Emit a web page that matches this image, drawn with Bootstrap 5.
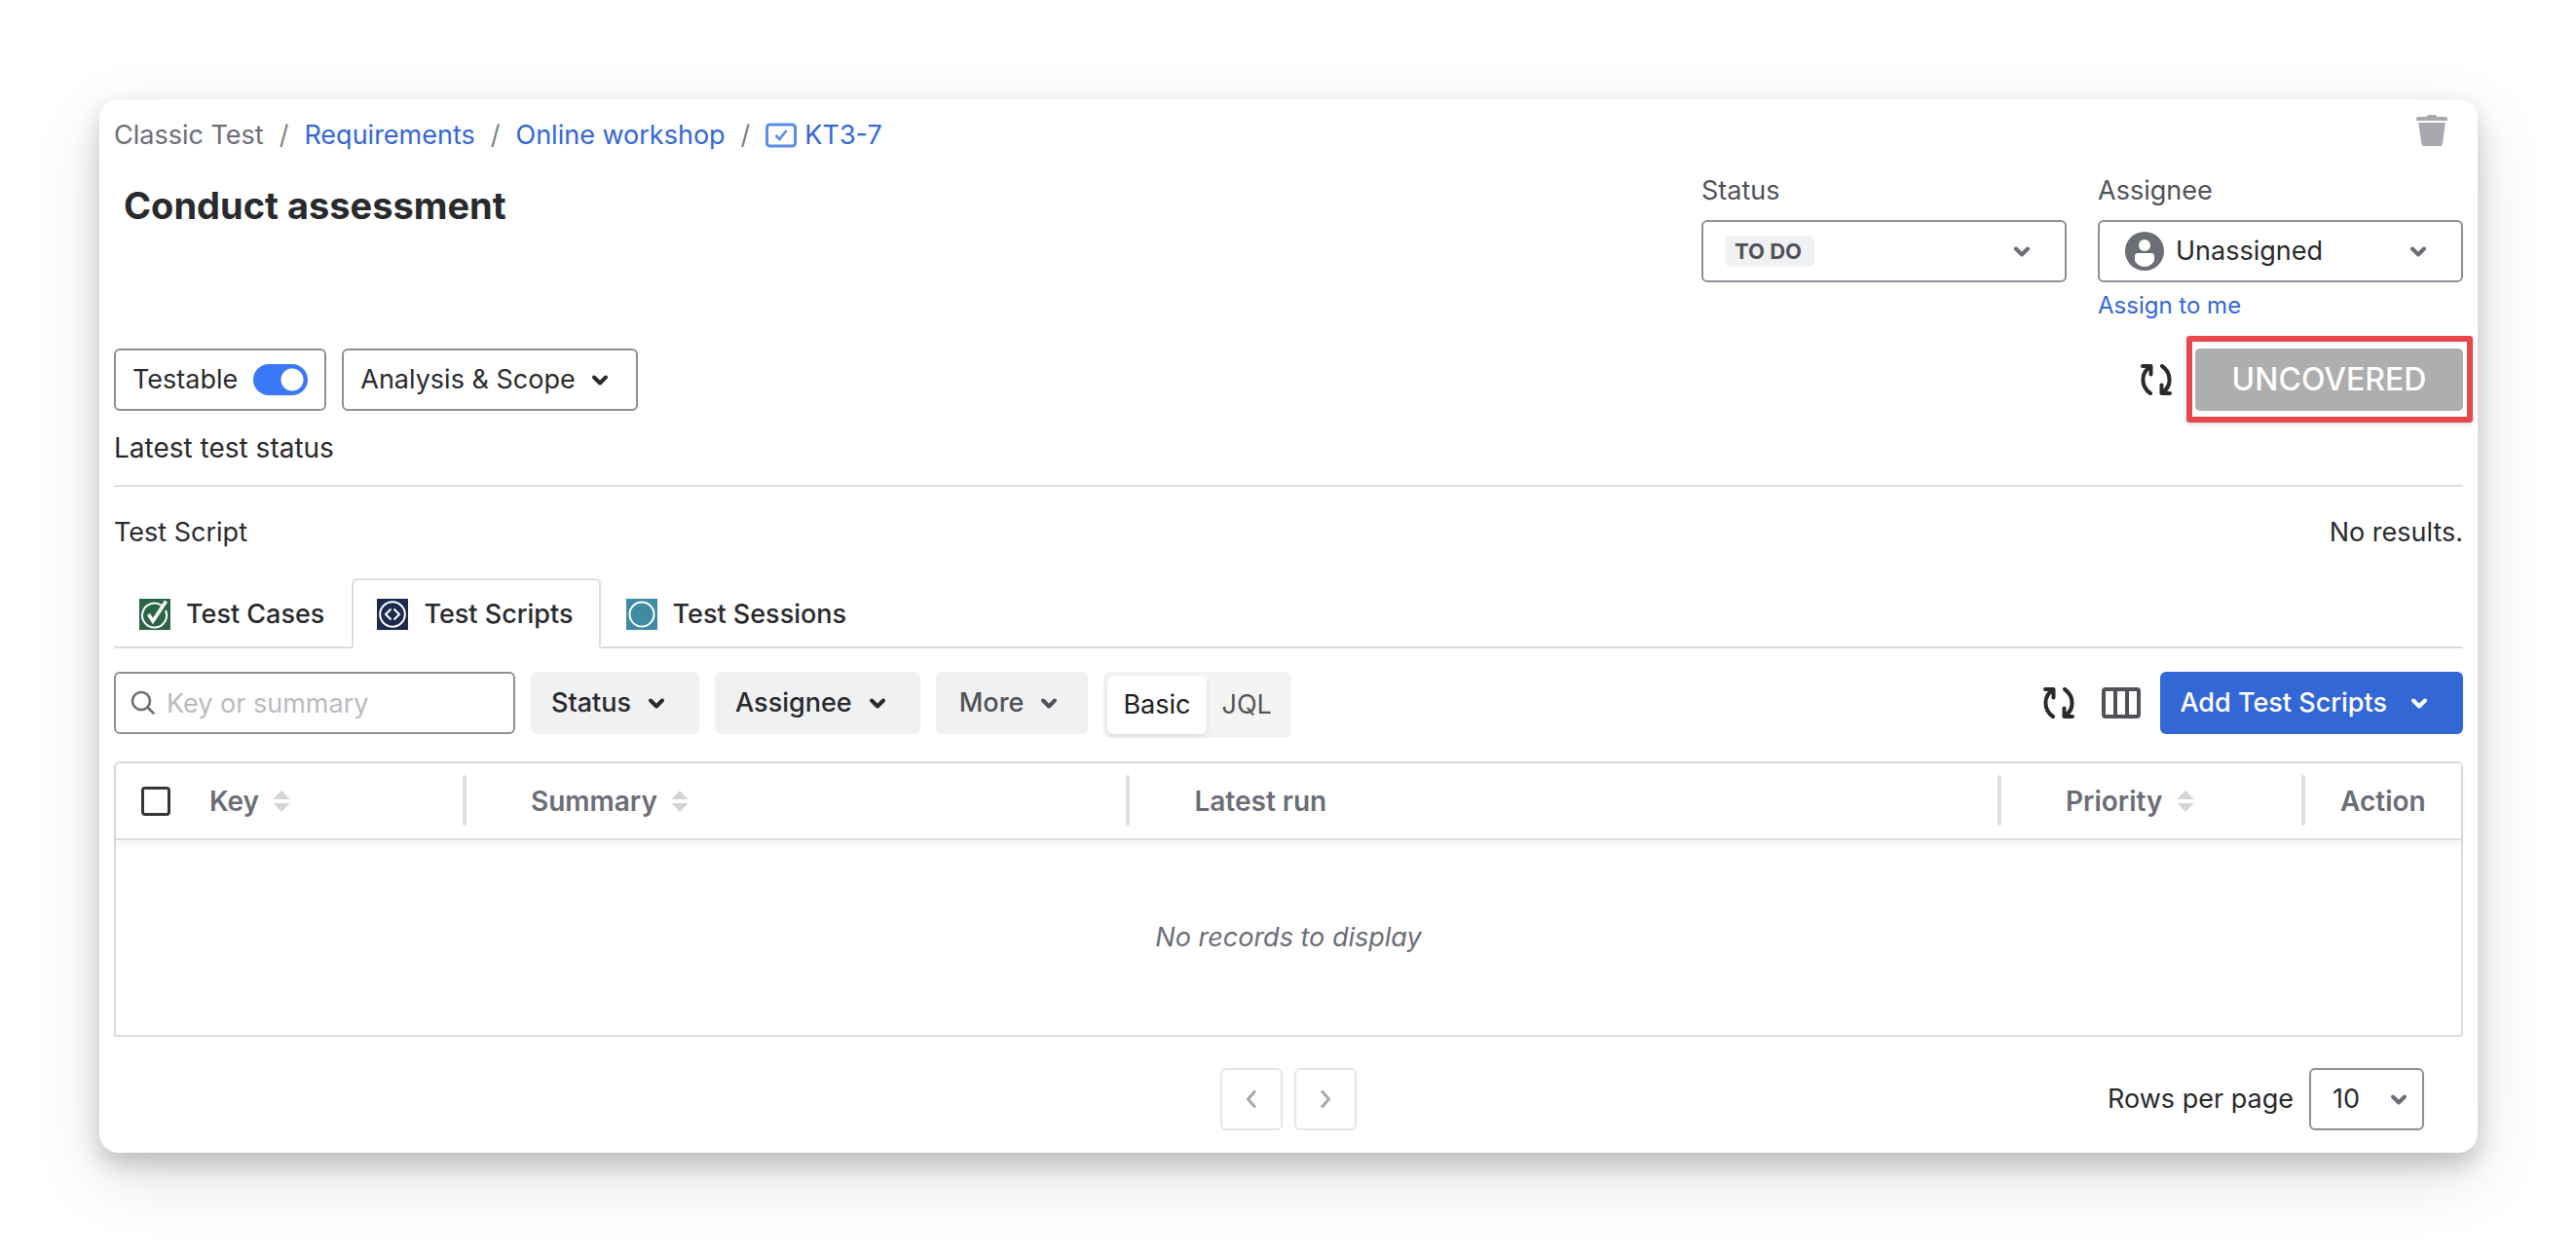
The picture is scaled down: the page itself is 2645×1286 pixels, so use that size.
<!DOCTYPE html>
<html lang="en">
<head>
<meta charset="utf-8">
<meta name="viewport" content="width=device-width, initial-scale=1">
<title>Conduct assessment</title>
<link href="https://cdn.jsdelivr.net/npm/bootstrap@5.3.0/dist/css/bootstrap.min.css" rel="stylesheet">
<style>
  :root {
    --ink: #292a2e;
    --ink-soft: #505258;
    --ink-muted: #6b6e76;
    --edge: #8c8f97;
    --rule: #dddddd;
    --brand: #3367d6;
    --fill: #f0f1f2;
  }
  body {
    font-family: Inter, "Liberation Sans", sans-serif;
    font-size: 27px;
    line-height: 32px;
    color: var(--ink);
    background: #fff;
    padding: 102px 101px 102px 102px;
  }
  a { color: var(--brand); text-decoration: none; }
  svg { display: block; flex: none; }
  .panel {
    padding: 15px 15px 23px;
    border-radius: 20px;
    background: #fff;
    box-shadow: 0 12px 24px rgba(0,0,0,.18), 0 24px 72px rgba(0,0,0,.13);
  }
  .crumb-row { height: 63px; }
  .crumbs { --bs-breadcrumb-item-padding-x: 16px; --bs-breadcrumb-divider-color: #7d818a; padding-top: 6px; margin: 0; }
  .crumbs .breadcrumb-item:first-child { color: var(--ink-muted); }
  .crumbs .breadcrumb-item { display: flex; align-items: center; }
  .icon-btn { border: 0; background: none; padding: 0; color: var(--ink); }
  .trash { color: #a7a9ad; margin: 1px 16px 0 0; }
  .head-row { min-height: 178px; }
  .page-title { font-size: 38px; line-height: 48px; font-weight: 700; margin: 7px 0 0 10px; }
  .fields { gap: 32px; }
  .field-col { width: 375px; }
  .field-col label { display: block; color: var(--ink-soft); margin-bottom: 14px; }
  .field-col a { display: block; font-size: 24px; margin-top: 8px; }
  .picker {
    appearance: none;
    height: 64px;
    border: 2px solid var(--edge);
    border-radius: 6px;
    background: #fff;
    color: var(--ink);
    outline-offset: 2px;
  }
  .field-col .picker { width: 100%; }
  .picker-wrap { position: relative; }
  .picker-wrap .chev { position: absolute; right: 37px; top: 24px; pointer-events: none; color: var(--ink-muted); }
  .picker-wrap .avatar { position: absolute; left: 28px; top: 12px; pointer-events: none; }
  .picker-status {
    padding: 0 80px 0 32px;
    font-size: 22px;
    font-weight: 700;
    color: var(--ink-soft);
    background: #fff url("data:image/svg+xml,%3Csvg xmlns='http://www.w3.org/2000/svg' width='92' height='32'%3E%3Crect width='92' height='32' rx='6' fill='%23f0f1f2'/%3E%3C/svg%3E") 22px 14px no-repeat;
  }
  .picker-user { padding: 0 70px 0 78px; }
  .boxed {
    display: inline-flex;
    align-items: center;
    gap: 16px;
    height: 64px;
    padding: 0 17px;
    border: 2px solid var(--edge);
    border-radius: 6px;
    background: #fff;
    color: var(--ink);
  }
  .boxed-menu { padding-right: 28px; }
  .toggle.form-check-input {
    appearance: none;
    width: 56px;
    height: 32px;
    margin: 0;
    border: 0;
    border-radius: 16px;
    background: #3b78f5 radial-gradient(circle at 40px 16px, #fff 11px, transparent 12px);
  }
  .cover {
    position: relative;
    width: 275px;
    height: 64px;
    border-radius: 5px;
    background: #aeaeae;
    color: #fff;
    font-size: 32px;
    line-height: 64px;
    font-weight: 500;
    text-align: center;
    margin-left: 24px;
  }
  .cover::after {
    content: "";
    position: absolute;
    inset: -13px -10px -12px -9px;
    border: 6px solid #e7484d;
    border-radius: 3px;
    box-shadow: 0 2px 4px rgba(0,0,0,.15);
  }
  .latest { font-size: 28px; margin: 22px 0; }
  .split { border: 0; border-top: 2px solid var(--rule); opacity: 1; margin: 0; }
  .result-line { margin: 31px 0; }
  .script-tabs { border-bottom: 2px solid var(--rule); --bs-nav-tabs-border-width: 2px; --bs-nav-tabs-border-radius: 6px; --bs-nav-tabs-link-active-border-color: #ddd #ddd #fff; --bs-nav-tabs-link-active-color: var(--ink); }
  .script-tabs .nav-link {
    display: flex;
    align-items: center;
    gap: 16px;
    height: 72px;
    padding: 2px 26px 0 24px;
    color: var(--ink);
    font-weight: 500;
  }
  .tools { margin: 24px 0; }
  .search { position: relative; width: 412px; margin-right: 16px; }
  .search svg { position: absolute; left: 17px; top: 19px; color: var(--ink-muted); }
  .search input { width: 100%; height: 64px; padding: 0 16px 0 52px; border: 2px solid var(--edge); border-radius: 6px; color: var(--ink); }
  .search input::placeholder { color: #b9bbc0; opacity: 1; }
  .filter {
    display: flex;
    align-items: center;
    gap: 17px;
    height: 64px;
    padding: 0 35px 0 21px;
    margin-right: 16px;
    border: 0;
    border-radius: 6px;
    background: var(--fill);
    color: var(--ink);
    font-weight: 500;
  }
  .filter-more { padding: 0 31px 0 24px; color: var(--ink-soft); }
  .modes { height: 68px; padding: 4px; border-radius: 6px; background: #f4f4f4; }
  .modes label { height: 60px; line-height: 60px; padding: 0 16px; border-radius: 6px; color: #555; }
  .modes .btn-check:checked + label { background: #fff; color: #1d1d1f; box-shadow: 0 2px 5px rgba(0,0,0,.1); }
  .icon-pair { gap: 28px; height: 64px; margin-right: 20px; }
  .add-btn { display: flex; align-items: center; gap: 24px; height: 64px; padding: 0 36px 0 20px; border: 0; border-radius: 6px; background: var(--brand); color: #fff; font-weight: 500; }
  .grid-box { border: 2px solid var(--rule); border-radius: 6px 6px 0 0; }
  .grid-box table { width: 100%; table-layout: fixed; border-collapse: separate; border-spacing: 0; }
  .grid-box th { position: relative; height: 79px; padding: 0 0 0 66px; color: var(--ink-muted); font-size: 28px; font-weight: 600; border-bottom: 2px solid var(--rule); }
  .grid-box thead { box-shadow: 0 4px 8px rgba(0,0,0,.06); }
  .grid-box th.ruled::after { content: ""; position: absolute; right: 0; top: 12px; width: 4px; height: 52px; border-radius: 2px; background: #dfdfdf; }
  .grid-box th.tight { padding-left: 0; }
  .grid-box th.act { padding-left: 36px; }
  .grid-box th.pick { padding-left: 26px; }
  .sorter { display: flex; align-items: center; gap: 14px; padding: 0; border: 0; background: none; color: inherit; font-weight: inherit; }
  .grid-box input { display: block; appearance: none; width: 30px; height: 30px; margin: 0; border: 3px solid #35363a; border-radius: 4px; background: #fff; }
  .grid-box td { height: 200px; text-align: center; font-style: italic; color: var(--ink-muted); }
  .c-pick { width: 96px; } .c-key { width: 264px; } .c-sum { width: 28.3%; } .c-pri { width: 312px; } .c-act { width: 160px; }
  .foot { display: grid; grid-template-columns: 1fr auto 1fr; align-items: center; margin-top: 32px; }
  .pager { gap: 12px; }
  .pager button { display: grid; place-items: center; width: 64px; height: 64px; padding: 0; border: 2px solid #e6e6e6; border-radius: 6px; background: #fff; color: #a9a9a9; }
  .per-page { gap: 16px; margin-right: 40px; }
  .per-page .picker { width: 118px; padding: 0 0 0 22px; }
  .per-page .chev { right: 17px; }
</style>
</head>
<body>
<svg width="0" height="0" class="position-absolute" aria-hidden="true">
  <symbol id="chev" viewBox="0 0 18 16"><path d="M3 5.500l6 6 6-6" fill="none" stroke="currentColor" stroke-width="4" stroke-linecap="round" stroke-linejoin="round"/></symbol>
  <symbol id="sync" viewBox="0 0 32 32"><g fill="none" stroke="currentColor" stroke-width="4" stroke-linecap="round" stroke-linejoin="round"><path d="M10 30C0 23 0 9 9.500 3M2 2h8.500v8.500"/><path d="M22 2c10 7 10 21 .5 27M30 30h-8.500v-8.500"/></g></symbol>
  <symbol id="sort" viewBox="0 0 18 22"><path d="M9 0l8.500 9H.5zM9 22L.5 13h17z" fill="#d3d4d6"/></symbol>
</svg>
<main class="panel">
  <div class="crumb-row d-flex justify-content-between align-items-start">
    <nav aria-label="breadcrumb">
      <ol class="breadcrumb crumbs">
        <li class="breadcrumb-item">Classic Test</li>
        <li class="breadcrumb-item"><a href="#">Requirements</a></li>
        <li class="breadcrumb-item"><a href="#">Online workshop</a></li>
        <li class="breadcrumb-item"><a href="#" class="d-flex align-items-center gap-2"><svg width="32" height="26" viewBox="0 0 32 26" fill="none" stroke="#5a8ce8"><rect x="1.500" y="2" width="29" height="22" rx="3" stroke-width="3"/><path d="M10.500 13l4 4 7-9" stroke-width="2.600"/></svg>KT3-7</a></li>
      </ol>
    </nav>
    <button type="button" class="icon-btn trash" aria-label="Delete"><svg width="32" height="32" viewBox="0 0 32 32" fill="currentColor"><path d="M0 6V4q0-2 2-2h8.500q.5-2 2.500-2h6q2 0 2.500 2H30q2 0 2 2v2zM2.200 8h27.600L27 30q-.3 2-2 2H7.500q-1.700 0-2-2z"/></svg></button>
  </div>

  <div class="head-row d-flex justify-content-between align-items-start">
    <h1 class="page-title">Conduct assessment</h1>
    <div class="fields d-flex">
      <div class="field-col">
        <label for="status">Status</label>
        <div class="picker-wrap">
          <select id="status" class="picker picker-status"><option>TO DO</option></select>
          <svg class="chev" width="18" height="16"><use href="#chev"/></svg>
        </div>
      </div>
      <div class="field-col">
        <label for="assignee">Assignee</label>
        <div class="picker-wrap">
          <select id="assignee" class="picker picker-user"><option>Unassigned</option></select>
          <svg class="avatar" width="40" height="40" viewBox="0 0 40 40"><circle cx="20" cy="20" r="20" fill="#6b6e76"/><circle cx="20" cy="14" r="6" fill="#fff"/><path d="M10 25q0-3 3-3h14q3 0 3 3v5q-4 6-10 6t-10-6z" fill="#fff"/></svg>
          <svg class="chev" width="18" height="16"><use href="#chev"/></svg>
        </div>
        <a href="#">Assign to me</a>
      </div>
    </div>
  </div>

  <div class="d-flex justify-content-between align-items-center">
    <div class="d-flex gap-3">
      <div class="boxed"><label for="testable">Testable</label><input id="testable" type="checkbox" role="switch" class="form-check-input toggle" checked></div>
      <button type="button" class="boxed boxed-menu">Analysis &amp; Scope <svg width="18" height="16"><use href="#chev"/></svg></button>
    </div>
    <div class="d-flex align-items-center">
      <button type="button" class="icon-btn" aria-label="Refresh coverage"><svg width="32" height="32"><use href="#sync"/></svg></button>
      <div class="cover">UNCOVERED</div>
    </div>
  </div>

  <p class="latest">Latest test status</p>
  <hr class="split">
  <div class="result-line d-flex justify-content-between"><span>Test Script</span><span>No results.</span></div>

  <ul class="nav nav-tabs script-tabs">
    <li class="nav-item"><a class="nav-link" href="#"><svg width="32" height="32" viewBox="0 0 32 32" fill="none" stroke="#fff"><path d="M0 0h32v32H0z" fill="#2a6645" stroke="none"/><path d="M23 7a12.500 12.500 0 1 0 4 5" stroke-width="2"/><path d="M9.500 16l4.500 7L27.500 2.500" stroke-width="3.600"/></svg>Test Cases</a></li>
    <li class="nav-item"><a class="nav-link active" aria-current="page" href="#"><svg width="32" height="32" viewBox="0 0 32 32" fill="none" stroke="#fff" stroke-width="2"><path d="M0 0h32v32H0z" fill="#1b2a4e" stroke="none"/><circle cx="16" cy="16" r="12.800"/><path d="M14.500 10.500L9 16l5.500 5.500M17.500 10.500L23 16l-5.500 5.500"/></svg>Test Scripts</a></li>
    <li class="nav-item"><a class="nav-link" href="#"><svg width="32" height="32" viewBox="0 0 32 32"><path d="M0 0h32v32H0z" fill="#3f8ba3"/><circle cx="16" cy="16" r="12.500" fill="none" stroke="#fff" stroke-width="2"/></svg>Test Sessions</a></li>
  </ul>

  <div class="tools d-flex justify-content-between align-items-start">
    <div class="d-flex">
      <div class="search">
        <svg width="26" height="26" viewBox="0 0 26 26" fill="none" stroke="currentColor" stroke-width="2.600" stroke-linecap="round"><circle cx="11" cy="11" r="9"/><path d="M18 18l5.500 5.500"/></svg>
        <input type="text" placeholder="Key or summary" aria-label="Key or summary">
      </div>
      <button type="button" class="filter">Status <svg width="18" height="16"><use href="#chev"/></svg></button>
      <button type="button" class="filter">Assignee <svg width="18" height="16"><use href="#chev"/></svg></button>
      <button type="button" class="filter filter-more">More <svg width="18" height="16"><use href="#chev"/></svg></button>
      <div class="modes d-flex" role="group" aria-label="Query mode">
        <input type="radio" class="btn-check" name="mode" id="m-basic" checked><label for="m-basic">Basic</label>
        <input type="radio" class="btn-check" name="mode" id="m-jql"><label for="m-jql">JQL</label>
      </div>
    </div>
    <div class="d-flex">
      <div class="icon-pair d-flex align-items-center">
        <button type="button" class="icon-btn" aria-label="Refresh list"><svg width="32" height="32"><use href="#sync"/></svg></button>
        <button type="button" class="icon-btn" aria-label="Columns"><svg width="40" height="32" viewBox="0 0 40 32" fill="none" stroke="#505258" stroke-width="4"><rect x="2" y="2" width="36" height="28" rx="2"/><path d="M14 2v28M26 2v28"/></svg></button>
      </div>
      <button type="button" class="add-btn">Add Test Scripts <svg width="18" height="16"><use href="#chev"/></svg></button>
    </div>
  </div>

  <div class="grid-box">
    <table>
      <colgroup><col class="c-pick"><col class="c-key"><col class="c-sum"><col><col class="c-pri"><col class="c-act"></colgroup>
      <thead>
        <tr>
          <th class="pick"><input type="checkbox" aria-label="Select all"></th>
          <th class="tight ruled"><button type="button" class="sorter">Key <svg width="18" height="22"><use href="#sort"/></svg></button></th>
          <th class="ruled"><button type="button" class="sorter">Summary <svg width="18" height="22"><use href="#sort"/></svg></button></th>
          <th class="ruled">Latest run</th>
          <th class="ruled"><button type="button" class="sorter">Priority <svg width="18" height="22"><use href="#sort"/></svg></button></th>
          <th class="act">Action</th>
        </tr>
      </thead>
      <tbody><tr><td colspan="6">No records to display</td></tr></tbody>
    </table>
  </div>

  <div class="foot">
    <span></span>
    <div class="pager d-flex">
      <button type="button" aria-label="Previous page"><svg width="12" height="20" viewBox="0 0 12 20" fill="none" stroke="currentColor" stroke-width="3"><path d="M10 1.500L2.500 10l7.500 8.500"/></svg></button>
      <button type="button" aria-label="Next page"><svg width="12" height="20" viewBox="0 0 12 20" fill="none" stroke="currentColor" stroke-width="3"><path d="M2 1.500L9.500 10 2 18.500"/></svg></button>
    </div>
    <div class="per-page d-flex align-items-center justify-content-end">
      <label for="rows">Rows per page</label>
      <div class="picker-wrap"><select id="rows" class="picker"><option>10</option></select><svg class="chev" width="18" height="16"><use href="#chev"/></svg></div>
    </div>
  </div>
</main>
<script src="https://cdn.jsdelivr.net/npm/bootstrap@5.3.0/dist/js/bootstrap.bundle.min.js"></script>
</body>
</html>
